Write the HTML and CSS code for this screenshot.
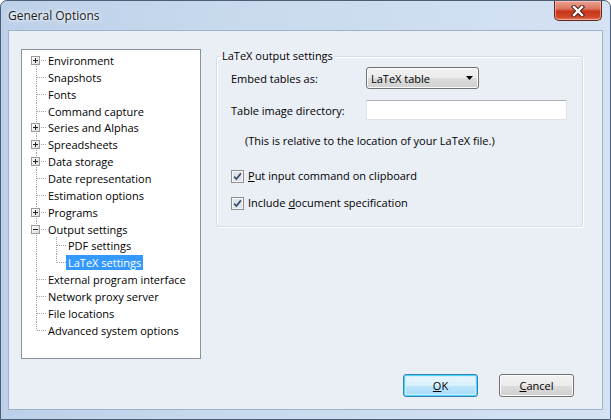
FILE: index.html
```html
<!DOCTYPE html>
<html>
<head>
<meta charset="utf-8">
<title>General Options</title>
<link rel="stylesheet" href="styles.css">
</head>
<body>
<div class="window">
  <div class="titlebar">
    <span class="title">General Options</span>
    <div class="close">
      <svg width="14" height="12" viewBox="0 0 14 12">
        <path d="M3 2 L11 10 M11 2 L3 10" stroke="#4a1e18" stroke-width="4.4" stroke-linecap="square" fill="none"/>
        <path d="M3 2 L11 10 M11 2 L3 10" stroke="#ffffff" stroke-width="2.4" stroke-linecap="square" fill="none"/>
      </svg>
    </div>
  </div>
  <div class="client">
    <div class="tree">
      <div class="node first"><span class="exp plus"></span><span class="label">Environment</span></div>
      <div class="node"><span class="exp none"></span><span class="label">Snapshots</span></div>
      <div class="node"><span class="exp none"></span><span class="label">Fonts</span></div>
      <div class="node"><span class="exp none"></span><span class="label">Command capture</span></div>
      <div class="node"><span class="exp plus"></span><span class="label">Series and Alphas</span></div>
      <div class="node"><span class="exp plus"></span><span class="label">Spreadsheets</span></div>
      <div class="node"><span class="exp plus"></span><span class="label">Data storage</span></div>
      <div class="node"><span class="exp none"></span><span class="label">Date representation</span></div>
      <div class="node"><span class="exp none"></span><span class="label">Estimation options</span></div>
      <div class="node"><span class="exp plus"></span><span class="label">Programs</span></div>
      <div class="node"><span class="exp minus"></span><span class="label">Output settings</span></div>
      <div class="node child"><span class="exp none"></span><span class="label">PDF settings</span></div>
      <div class="node child lastchild"><span class="exp none"></span><span class="label selected">LaTeX settings</span></div>
      <div class="node"><span class="exp none"></span><span class="label">External program interface</span></div>
      <div class="node"><span class="exp none"></span><span class="label">Network proxy server</span></div>
      <div class="node"><span class="exp none"></span><span class="label">File locations</span></div>
      <div class="node last"><span class="exp none"></span><span class="label">Advanced system options</span></div>
    </div>
    <div class="pane">
      <fieldset class="group">
        <legend>LaTeX output settings</legend>
        <div class="group-body">
          <div class="row row-embed">
            <span class="field-label">Embed tables as:</span>
            <div class="combo">
              <span>LaTeX table</span>
              <svg width="7" height="4" viewBox="0 0 7 4"><polygon points="0,0 7,0 3.5,4" fill="#000"/></svg>
            </div>
          </div>
          <div class="row row-dir">
            <span class="field-label">Table image directory:</span>
            <div class="textbox"></div>
          </div>
          <div class="note">(This is relative to the location of your LaTeX file.)</div>
          <div class="check check-first">
            <svg class="cb" width="13" height="13" viewBox="0 0 13 13">
              <rect x="0.5" y="0.5" width="12" height="12" fill="#f6f6f6" stroke="#8e8f8f"/>
              <rect x="2" y="2" width="9" height="9" fill="#dfe3ea"/>
              <path d="M3.2 6.6 L5.4 9 L9.9 3.4" stroke="#3b4a66" stroke-width="1.7" fill="none"/>
            </svg>
            <span><u>P</u>ut input command on clipboard</span>
          </div>
          <div class="check">
            <svg class="cb" width="13" height="13" viewBox="0 0 13 13">
              <rect x="0.5" y="0.5" width="12" height="12" fill="#f6f6f6" stroke="#8e8f8f"/>
              <rect x="2" y="2" width="9" height="9" fill="#dfe3ea"/>
              <path d="M3.2 6.6 L5.4 9 L9.9 3.4" stroke="#3b4a66" stroke-width="1.7" fill="none"/>
            </svg>
            <span>Include <u>d</u>ocument specification</span>
          </div>
        </div>
      </fieldset>
      <div class="buttons">
        <div class="btn btn-default"><u>O</u>K</div>
        <div class="btn"><u>C</u>ancel</div>
      </div>
    </div>
  </div>
</div>
</body>
</html>
```

FILE: styles.css
```css
html, body {
  margin: 0;
  padding: 0;
}
body {
  width: 611px;
  height: 420px;
  overflow: hidden;
  background: #ffffff;
  font-family: "Open Sans", "Noto Sans", sans-serif;
  font-size: 11px;
  color: #000;
}
.window {
  width: 611px;
  height: 420px;
  box-sizing: border-box;
  border: 1px solid #4d5d73;
  border-radius: 7px 7px 0 0;
  background: linear-gradient(90deg, #bcd0e9 0%, #c9daee 40%, #d4e2f3 100%);
  padding: 0 7px 9px;
  display: flex;
  flex-direction: column;
}
.titlebar {
  height: 29px;
  display: flex;
  justify-content: space-between;
  align-items: flex-start;
}
.title {
  align-self: center;
  font-size: 12px;
  color: #1a1a1a;
  text-shadow: 0 0 6px #ffffff, 0 0 3px #ffffff;
}
.close {
  width: 48px;
  height: 20px;
  box-sizing: border-box;
  margin-right: 1px;
  border: 1px solid #5e2a22;
  border-top: none;
  border-radius: 0 0 5px 5px;
  background: linear-gradient(#eaa595 0%, #dd7560 40%, #c8341a 55%, #d2472a 85%, #df8466 100%);
  display: flex;
  align-items: center;
  justify-content: center;
  box-shadow: inset 0 0 0 1px rgba(255, 220, 210, 0.5);
}
.client {
  flex: 1;
  box-sizing: border-box;
  border: 1px solid #9fb2ca;
  background: #eaeef5;
  display: flex;
  align-items: stretch;
  padding: 17px 19px 12px 12px;
}
.tree {
  width: 180px;
  height: 310px;
  box-sizing: border-box;
  margin-top: 1px;
  border: 1px solid #8a929c;
  background: #ffffff;
  padding-top: 2px;
  flex-shrink: 0;
}
.node {
  height: 16.86px;
  display: flex;
  align-items: center;
  padding-left: 9px;
  background:
    repeating-linear-gradient(180deg, #a5a5a5 0 1px, transparent 1px 2px) 14px 0 / 1px 100% no-repeat,
    repeating-linear-gradient(90deg, #a5a5a5 0 1px, transparent 1px 2px) 15px 50% / 9px 1px no-repeat;
}
.node.first {
  background:
    repeating-linear-gradient(180deg, #a5a5a5 0 1px, transparent 1px 2px) 14px 100% / 1px 50% no-repeat,
    repeating-linear-gradient(90deg, #a5a5a5 0 1px, transparent 1px 2px) 15px 50% / 9px 1px no-repeat;
}
.node.last {
  background:
    repeating-linear-gradient(180deg, #a5a5a5 0 1px, transparent 1px 2px) 14px 0 / 1px 50% no-repeat,
    repeating-linear-gradient(90deg, #a5a5a5 0 1px, transparent 1px 2px) 15px 50% / 9px 1px no-repeat;
}
.node.child {
  padding-left: 29px;
  background:
    repeating-linear-gradient(180deg, #a5a5a5 0 1px, transparent 1px 2px) 14px 0 / 1px 100% no-repeat,
    repeating-linear-gradient(180deg, #a5a5a5 0 1px, transparent 1px 2px) 34px 0 / 1px 100% no-repeat,
    repeating-linear-gradient(90deg, #a5a5a5 0 1px, transparent 1px 2px) 35px 50% / 9px 1px no-repeat;
}
.node.child.lastchild {
  background:
    repeating-linear-gradient(180deg, #a5a5a5 0 1px, transparent 1px 2px) 14px 0 / 1px 100% no-repeat,
    repeating-linear-gradient(180deg, #a5a5a5 0 1px, transparent 1px 2px) 34px 0 / 1px 50% no-repeat,
    repeating-linear-gradient(90deg, #a5a5a5 0 1px, transparent 1px 2px) 35px 50% / 9px 1px no-repeat;
}
.exp {
  width: 9px;
  height: 9px;
  box-sizing: border-box;
  margin-right: 6px;
  flex-shrink: 0;
}
.exp.none {
  visibility: hidden;
}
.exp.plus {
  border: 1px solid #9a9a9a;
  background:
    linear-gradient(#222, #222) 1px 3px / 5px 1px no-repeat,
    linear-gradient(#222, #222) 3px 1px / 1px 5px no-repeat,
    linear-gradient(135deg, #ffffff, #dcdcdc);
}
.exp.minus {
  border: 1px solid #9a9a9a;
  background:
    linear-gradient(#222, #222) 1px 3px / 5px 1px no-repeat,
    linear-gradient(135deg, #ffffff, #dcdcdc);
}
.label {
  padding: 0 2px;
  line-height: 15px;
  white-space: nowrap;
  color: #000;
}
.label.selected {
  background: #3399ff;
  color: #ffffff;
}
.pane {
  flex: 1;
  margin-left: 15px;
  display: flex;
  flex-direction: column;
}
.group {
  margin: 0;
  padding: 0;
  border: 1px solid #d3dde6;
  border-radius: 3px;
  box-shadow: inset 1px 1px 0 #ffffff, 1px 1px 0 #ffffff;
}
.group legend {
  margin-left: 3px;
  padding: 0 2px;
  line-height: 16px;
}
.group-body {
  padding: 0 14px 15px 14px;
}
.row {
  display: flex;
  align-items: center;
}
.row-embed {
  margin-top: 3px;
}
.row-dir {
  margin-top: 11px;
}
.field-label {
  width: 135px;
  flex-shrink: 0;
}
.combo {
  width: 113px;
  height: 22px;
  box-sizing: border-box;
  border: 1px solid #707070;
  border-radius: 3px;
  background: linear-gradient(#f2f2f2 0%, #ebebeb 50%, #dddddd 51%, #cfcfcf 100%);
  box-shadow: inset 0 0 0 1px #fcfcfc;
  display: flex;
  align-items: center;
  justify-content: space-between;
  padding: 0 5px 0 4px;
}
.textbox {
  width: 201px;
  height: 20px;
  box-sizing: border-box;
  background: #ffffff;
  border: 1px solid #dfe2e8;
  border-top-color: #abadb3;
}
.note {
  margin-top: 13px;
  margin-left: 14px;
  line-height: 16px;
}
.check {
  display: flex;
  align-items: center;
  line-height: 16px;
  margin-top: 11px;
}
.check.check-first {
  margin-top: 19px;
}
.cb {
  margin-right: 4px;
  flex-shrink: 0;
}
.buttons {
  margin-top: auto;
  display: flex;
  justify-content: flex-end;
  gap: 21px;
  padding-right: 9px;
}
.btn {
  width: 75px;
  height: 23px;
  box-sizing: border-box;
  border: 1px solid #707070;
  border-radius: 3px;
  background: linear-gradient(#f2f2f2 0%, #ebebeb 50%, #dddddd 51%, #cfcfcf 100%);
  box-shadow: inset 0 0 0 1px #fcfcfc;
  display: flex;
  align-items: center;
  justify-content: center;
}
.btn-default {
  border-color: #3c7fb1;
  background: linear-gradient(#eaf6fd 0%, #d9f0fc 50%, #bee6fd 51%, #a7d9f5 100%);
  box-shadow: inset 0 0 0 1px #48d6fb, inset 0 0 0 2px #cdeffc;
}
```
